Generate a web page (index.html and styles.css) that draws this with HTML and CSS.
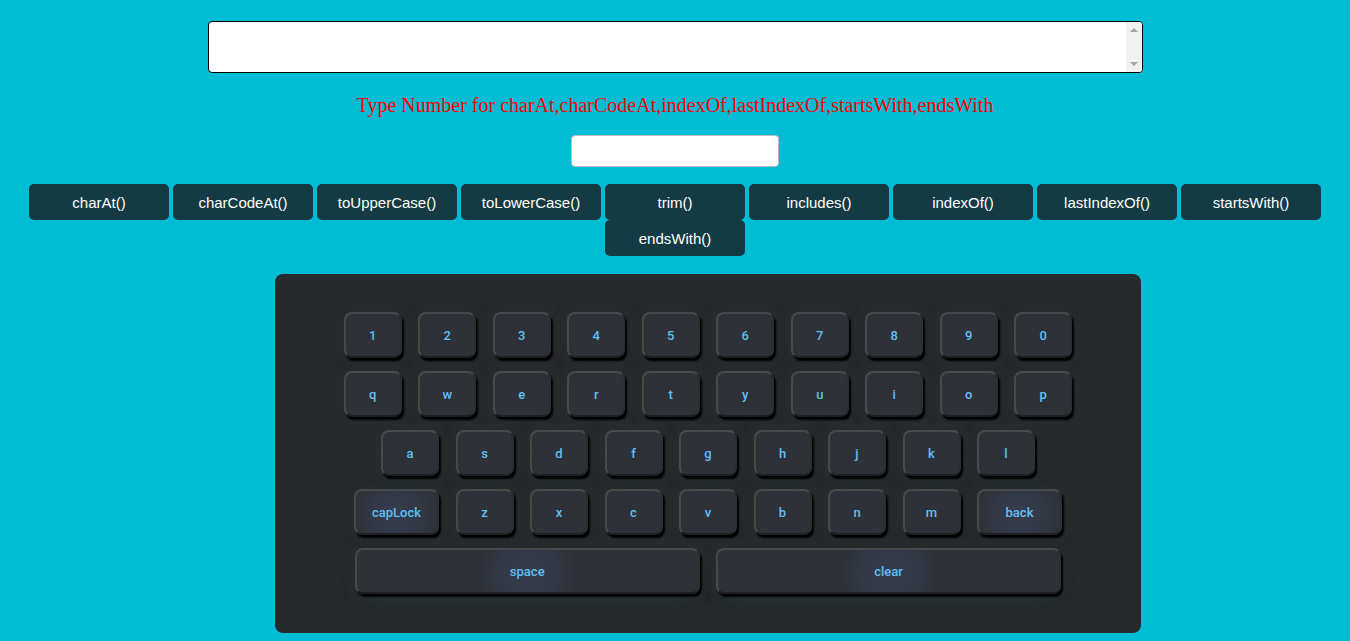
FILE: index.html
```html
<!DOCTYPE html>
<html>
<head>
<meta charset="utf-8">
<link rel="stylesheet" href="styles.css">
</head>
<body>
<div class="page">
  <div class="area">
    <textarea class="output"></textarea>
    <div class="sbar"><span class="arr up"></span><span class="arr down"></span></div>
  </div>
  <p class="hint">Type Number for charAt,charCodeAt,indexOf,lastIndexOf,startsWith,endsWith</p>
  <input class="num" type="text">
  <div class="methods">
    <button class="m">charAt()</button>
    <button class="m">charCodeAt()</button>
    <button class="m">toUpperCase()</button>
    <button class="m">toLowerCase()</button>
    <button class="m">trim()</button>
    <button class="m">includes()</button>
    <button class="m">indexOf()</button>
    <button class="m">lastIndexOf()</button>
    <button class="m">startsWith()</button>
    <button class="m">endsWith()</button>
  </div>
  <div class="keyboard">
    <div class="row">
      <div class="key">1</div><div class="key">2</div><div class="key">3</div><div class="key">4</div><div class="key">5</div><div class="key">6</div><div class="key">7</div><div class="key">8</div><div class="key">9</div><div class="key">0</div>
    </div>
    <div class="row">
      <div class="key">q</div><div class="key">w</div><div class="key">e</div><div class="key">r</div><div class="key">t</div><div class="key">y</div><div class="key">u</div><div class="key">i</div><div class="key">o</div><div class="key">p</div>
    </div>
    <div class="row">
      <div class="key">a</div><div class="key">s</div><div class="key">d</div><div class="key">f</div><div class="key">g</div><div class="key">h</div><div class="key">j</div><div class="key">k</div><div class="key">l</div>
    </div>
    <div class="row">
      <div class="key wide glow">capLock</div><div class="key">z</div><div class="key">x</div><div class="key">c</div><div class="key">v</div><div class="key">b</div><div class="key">n</div><div class="key">m</div><div class="key wide glow">back</div>
    </div>
    <div class="row">
      <div class="key bar glow">space</div><div class="key bar glow left">clear</div>
    </div>
  </div>
</div>
</body>
</html>
```

FILE: styles.css
```css
html, body {
  margin: 0;
  padding: 0;
  background: #00bcd4;
}
.page {
  display: flex;
  flex-direction: column;
  align-items: center;
  padding-top: 21px;
}
.area {
  position: relative;
  width: 935px;
  height: 52px;
}
.output {
  box-sizing: border-box;
  width: 935px;
  height: 52px;
  margin: 0;
  border: 1px solid #000;
  border-radius: 4px;
  background: #fff;
  overflow: hidden;
  resize: none;
  display: block;
}
.sbar {
  position: absolute;
  top: 1px;
  right: 1px;
  width: 16px;
  height: 50px;
  background: #f1f1f1;
  border-radius: 0 3px 3px 0;
}
.arr {
  position: absolute;
  left: 4px;
  width: 0;
  height: 0;
  border-left: 4px solid transparent;
  border-right: 4px solid transparent;
}
.arr.up {
  top: 6px;
  border-bottom: 4px solid #a3a3a3;
}
.arr.down {
  bottom: 6px;
  border-top: 4px solid #a3a3a3;
}
.hint {
  margin: 19px 0 0;
  height: 26px;
  font-family: "Liberation Serif", serif;
  font-size: 20px;
  line-height: 26px;
  color: #ff0000;
}
.num {
  box-sizing: border-box;
  margin: 17px 0 0;
  width: 208px;
  height: 32px;
  border: 1px solid #bbb;
  border-radius: 4px;
  background: #fff;
  outline: none;
}
.methods {
  margin-top: 17px;
  width: 1300px;
  display: flex;
  flex-wrap: wrap;
  justify-content: center;
  column-gap: 4px;
  row-gap: 0;
}
.m {
  width: 140px;
  height: 36px;
  border: none;
  border-radius: 5px;
  background: #143a44;
  color: #fff;
  font-family: "Liberation Sans", Arial, sans-serif;
  font-size: 15px;
  padding: 0;
}
.keyboard {
  box-sizing: border-box;
  margin-top: 18px;
  margin-left: 66px;
  width: 866px;
  height: 359px;
  background: #272a2c;
  border-radius: 8px;
  padding-top: 38px;
  display: flex;
  flex-direction: column;
  align-items: center;
  gap: 13px;
}
.row {
  display: flex;
  gap: 16.5px;
}
.key {
  box-sizing: border-box;
  width: 58px;
  height: 46px;
  background: #2e3137;
  border: 2px solid #48494b;
  border-right-color: #2c2e31;
  border-bottom-color: #1e2023;
  border-radius: 8px;
  box-shadow: 2px 3px 2px #000, 0 0 14px rgba(40, 60, 60, 0.35);
  color: #5fc0f6;
  font-family: Roboto, "Liberation Sans", sans-serif;
  font-weight: 500;
  font-size: 13px;
  display: flex;
  align-items: center;
  justify-content: center;
  position: relative;
}
.wide {
  width: 85px;
}
.bar {
  width: 345px;
}
.glow {
  background: radial-gradient(circle at 50% 55%, #353c4d 0, #323846 25px, #2e3137 45px);
}
.bar.glow {
  background: radial-gradient(circle at 50% 55%, #353c4d 0, #323846 30px, #2e3137 50px);
  box-shadow: 2px 3px 2px #000, 0 0 14px rgba(40, 60, 60, 0.35), 0 14px 22px -10px rgba(20, 90, 80, 0.25);
}
.bar.left {
  justify-content: flex-start;
  padding-left: 156px;
  background: radial-gradient(circle at 172px 55%, #353c4d 0, #323846 30px, #2e3137 50px);
}
```
